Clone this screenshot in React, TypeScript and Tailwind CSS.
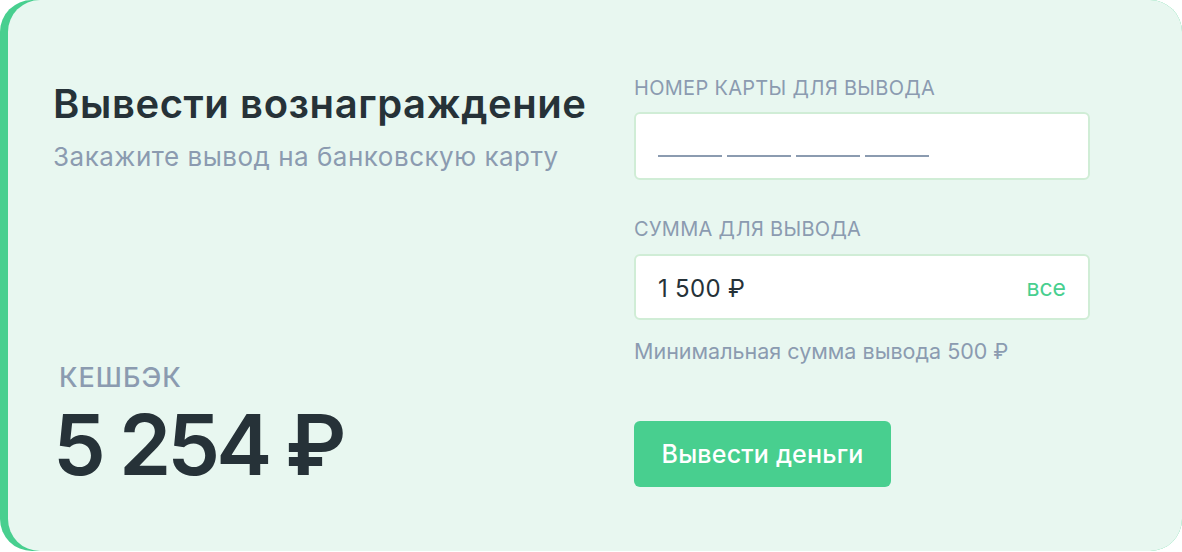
export default function App() {
  return (
    <div className="w-[1182px] h-[552px] bg-white" style={{ fontFamily: 'Inter, "Noto Sans", sans-serif' }}>
      <div className="h-[551px] rounded-[32px] bg-[#48cf8f] pl-2">
        <div className="flex h-full rounded-[32px] bg-[#e8f7f0] pl-[45px] pt-[76px] pb-[64px]">
          {/* left: title + cashback */}
          <div className="flex w-[581px] flex-col justify-between">
            <div className="mt-[4px]">
              <h1 className="text-[40px] font-semibold leading-[48px] tracking-[0.6px] text-[#263238]">
                Вывести вознаграждение
              </h1>
              <p className="mt-[13px] text-[26px] leading-[32px] tracking-[0.5px] text-[#8b9bb0]">
                Закажите вывод на банковскую карту
              </p>
            </div>
            <div>
              <div className="pl-[6px] text-[27px] font-medium leading-[32px] tracking-[1px] text-[#8b9bb0]">КЕШБЭК</div>
              <div className="mt-[9px] text-[84px] font-semibold leading-[84px] tracking-[-4px] text-[#263238]">
                5 254 ₽
              </div>
            </div>
          </div>
          {/* right: form */}
          <div className="flex w-[456px] flex-col">
            <label className="text-[20px] leading-[24px] tracking-[0.3px] text-[#8b9bb0]">НОМЕР КАРТЫ ДЛЯ ВЫВОДА</label>
            <div className="mt-[12px] flex h-[68px] items-end gap-[5px] rounded-[6px] border-2 border-[#d0edd6] bg-white pb-[21px] pl-[22px]">
              <span className="h-[2px] w-[64px] bg-[#8b9bb0]"></span>
              <span className="h-[2px] w-[64px] bg-[#8b9bb0]"></span>
              <span className="h-[2px] w-[64px] bg-[#8b9bb0]"></span>
              <span className="h-[2px] w-[64px] bg-[#8b9bb0]"></span>
            </div>
            <label className="mt-[37px] text-[20px] leading-[24px] tracking-[0.3px] text-[#8b9bb0]">СУММА ДЛЯ ВЫВОДА</label>
            <div className="mt-[13px] flex h-[66px] items-center justify-between rounded-[6px] border-2 border-[#d0edd6] bg-white px-[22px] pt-[3px]">
              <span className="text-[24px] tracking-[0.3px] text-[#263238]">1 500 ₽</span>
              <span className="text-[23px] text-[#48cf8f]">все</span>
            </div>
            <p className="mt-[17px] text-[21.5px] leading-[28px] text-[#8b9bb0]">Минимальная сумма вывода 500 ₽</p>
            <button className="mt-[56px] h-[66px] w-[257px] rounded-[6px] bg-[#48cf8f] pt-[2px] text-[25px] font-medium tracking-[0.2px] text-white">
              Вывести деньги
            </button>
          </div>
        </div>
      </div>
    </div>
  );
}
